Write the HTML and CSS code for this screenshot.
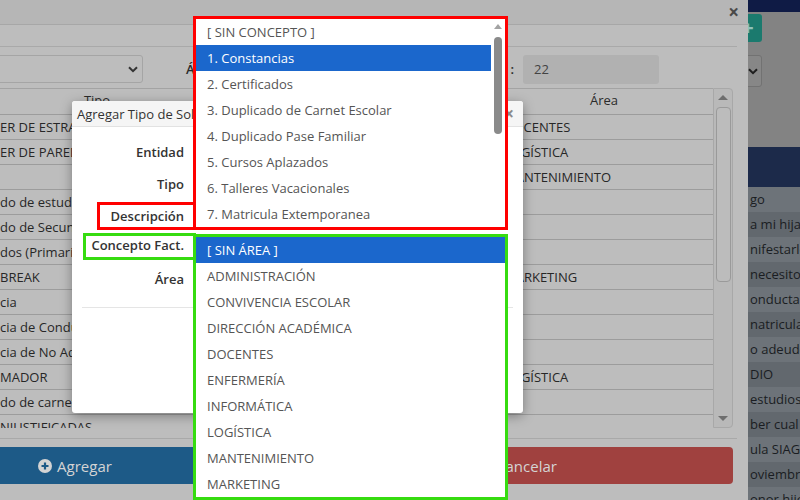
FILE: index.html
```html
<!DOCTYPE html>
<html lang="es">
<head>
<meta charset="utf-8">
<title>Tipos de Solicitud</title>
<link rel="stylesheet" href="styles.css">
</head>
<body>

<div class="page">
  <div class="topbar"></div>
  <div class="page-tools">
    <div class="page-add">+</div>
    <div class="page-select">
      <svg width="10" height="7" viewBox="0 0 10 7"><path d="M1 1.2 L5 5.2 L9 1.2" fill="none" stroke="#1e1e1e" stroke-width="2"/></svg>
    </div>
  </div>
  <div class="page-table">
    <div class="pt-head"></div>
    <div class="pt-row">go</div>
    <div class="pt-row">a mi hija</div>
    <div class="pt-row">nifestarle</div>
    <div class="pt-row">necesito</div>
    <div class="pt-row">onducta</div>
    <div class="pt-row">natricula</div>
    <div class="pt-row">o adeudo</div>
    <div class="pt-row">DIO</div>
    <div class="pt-row">estudios</div>
    <div class="pt-row">ber cual</div>
    <div class="pt-row">ula SIAGIE</div>
    <div class="pt-row">oviembre</div>
    <div class="pt-row">onor hijo</div>
  </div>
</div>

<div class="modal-big">
  <div class="mb-header">
    <span class="mb-title">Tipos de Solicitud</span>
    <span class="mb-close">×</span>
  </div>
  <div class="mb-body">
    <div class="mb-sep"></div>
    <div class="filters">
      <div class="select sel-ent">
        <span>COLEGIO</span>
        <svg width="10" height="7" viewBox="0 0 10 7"><path d="M1 1.2 L5 5.2 L9 1.2" fill="none" stroke="#333" stroke-width="2"/></svg>
      </div>
      <span class="flabel fl-area">Área</span>
      <div class="select sel-area">
        <span>[ TODAS ]</span>
        <svg width="10" height="7" viewBox="0 0 10 7"><path d="M1 1.2 L5 5.2 L9 1.2" fill="none" stroke="#333" stroke-width="2"/></svg>
      </div>
      <span class="flabel fl-total">Total<span class="colon">:</span></span>
      <div class="count">22</div>
    </div>
    <div class="grid-wrap">
      <div class="grid">
        <div class="g-head">
          <div class="gh">Código</div>
          <div class="gh">Tipo</div>
          <div class="gh">Descripción</div>
          <div class="gh">Área</div>
        </div>
        <div class="g-row"><div class="gc"></div><div class="gc">ER DE ESTRADO</div><div class="gc"></div><div class="gc">DOCENTES</div></div>
        <div class="g-row"><div class="gc"></div><div class="gc">ER DE PARED</div><div class="gc"></div><div class="gc">LOGÍSTICA</div></div>
        <div class="g-row"><div class="gc"></div><div class="gc"></div><div class="gc"></div><div class="gc">MANTENIMIENTO</div></div>
        <div class="g-row"><div class="gc"></div><div class="gc">do de estudios</div><div class="gc"></div><div class="gc"></div></div>
        <div class="g-row"><div class="gc"></div><div class="gc">do de Secundaria</div><div class="gc"></div><div class="gc"></div></div>
        <div class="g-row"><div class="gc"></div><div class="gc">dos (Primaria)</div><div class="gc"></div><div class="gc"></div></div>
        <div class="g-row"><div class="gc"></div><div class="gc">BREAK</div><div class="gc"></div><div class="gc">MARKETING</div></div>
        <div class="g-row"><div class="gc"></div><div class="gc">cia</div><div class="gc"></div><div class="gc"></div></div>
        <div class="g-row"><div class="gc"></div><div class="gc">cia de Conducta</div><div class="gc"></div><div class="gc"></div></div>
        <div class="g-row"><div class="gc"></div><div class="gc">cia de No Adeudo</div><div class="gc"></div><div class="gc"></div></div>
        <div class="g-row"><div class="gc"></div><div class="gc">MADOR</div><div class="gc"></div><div class="gc">LOGÍSTICA</div></div>
        <div class="g-row"><div class="gc"></div><div class="gc">do de carnet</div><div class="gc"></div><div class="gc"></div></div>
        <div class="g-row"><div class="gc"></div><div class="gc">NJUSTIFICADAS</div><div class="gc"></div><div class="gc"></div></div>
      </div>
      <div class="vscroll">
        <div class="vs-arrow"><span class="tri-up"></span></div>
        <div class="vs-thumb"></div>
        <div class="vs-space"></div>
        <div class="vs-arrow"><span class="tri-down"></span></div>
      </div>
    </div>
    <div class="mb-sep2"></div>
    <div class="actions">
      <div class="btn btn-primary">
        <svg width="14" height="14" viewBox="0 0 14 14"><circle cx="7" cy="7" r="7" fill="#d4d4d4"/><path d="M7 3.5 V10.5 M3.5 7 H10.5" stroke="#1d5a87" stroke-width="2.2"/></svg>
        <span>Agregar</span>
      </div>
      <div class="btn btn-danger">
        <svg width="14" height="14" viewBox="0 0 14 14"><circle cx="7" cy="7" r="7" fill="#d4d4d4"/><path d="M4.5 4.5 L9.5 9.5 M9.5 4.5 L4.5 9.5" stroke="#a0413f" stroke-width="2"/></svg>
        <span>Cancelar</span>
      </div>
    </div>
  </div>
</div>

<div class="modal-small">
  <div class="ms-header">
    <span class="ms-title">Agregar Tipo de Solicitud</span>
    <span class="ms-close">×</span>
  </div>
  <div class="ms-body">
    <div class="frow r1"><span class="flab">Entidad</span></div>
    <div class="frow r2"><span class="flab">Tipo</span></div>
    <div class="frow r3"><span class="flab">Descripción</span></div>
    <div class="frow r4"><span class="flab">Concepto Fact.</span></div>
    <div class="frow r5"><span class="flab">Área</span></div>
    <div class="ms-sep"></div>
  </div>
</div>

<div class="mark mark-red"></div>
<div class="mark mark-green"></div>

<div class="dd dd-red">
  <div class="opts">
    <div class="opt">[ SIN CONCEPTO ]</div>
    <div class="opt sel">1. Constancias</div>
    <div class="opt">2. Certificados</div>
    <div class="opt">3. Duplicado de Carnet Escolar</div>
    <div class="opt">4. Duplicado Pase Familiar</div>
    <div class="opt">5. Cursos Aplazados</div>
    <div class="opt">6. Talleres Vacacionales</div>
    <div class="opt">7. Matricula Extemporanea</div>
  </div>
  <div class="dd-scroll">
    <span class="dd-up"></span>
    <span class="dd-thumb"></span>
  </div>
</div>

<div class="dd dd-green">
  <div class="opts">
    <div class="opt sel">[ SIN ÁREA ]</div>
    <div class="opt">ADMINISTRACIÓN</div>
    <div class="opt">CONVIVENCIA ESCOLAR</div>
    <div class="opt">DIRECCIÓN ACADÉMICA</div>
    <div class="opt">DOCENTES</div>
    <div class="opt">ENFERMERÍA</div>
    <div class="opt">INFORMÁTICA</div>
    <div class="opt">LOGÍSTICA</div>
    <div class="opt">MANTENIMIENTO</div>
    <div class="opt">MARKETING</div>
  </div>
</div>

</body>
</html>
```

FILE: styles.css
```css
* { box-sizing: border-box; }

html, body {
  margin: 0;
  width: 800px;
  height: 500px;
  overflow: hidden;
}

body {
  position: relative;
  background: #838383;
  font-family: "Open Sans", "DejaVu Sans", sans-serif;
  font-size: 13px;
  color: #333;
}

/* ---------- underlying page (dimmed) ---------- */
.page {
  display: flex;
  flex-direction: column;
}
.topbar {
  height: 12px;
  background: #0f1b45;
}
.page-tools {
  margin-left: 700px;
  width: 62px;
  display: flex;
  flex-direction: column;
  align-items: flex-end;
}
.page-add {
  margin-top: 2px;
  width: 28px;
  height: 28px;
  border-radius: 3px;
  background: #1b7a6e;
  color: #8fc2ba;
  font-size: 20px;
  font-weight: 700;
  line-height: 27px;
  text-align: center;
}
.page-select {
  margin-top: 13px;
  width: 62px;
  height: 32px;
  border: 1px solid #727272;
  border-radius: 3px;
  background: #878787;
  display: flex;
  align-items: center;
  justify-content: flex-end;
  padding-right: 3px;
}
.page-table {
  margin-top: 60px;
  margin-left: 700px;
  width: 200px;
}
.pt-head {
  height: 40px;
  background: #1c2a4a;
}
.pt-row {
  height: 25px;
  line-height: 25px;
  padding-left: 50px;
  white-space: nowrap;
  overflow: hidden;
  color: #1a1d22;
  background: #6d7379;
}
.pt-row:nth-child(odd) {
  background: #62686e;
}

/* ---------- big modal (dimmed) ---------- */
.modal-big {
  position: absolute;
  left: -150px;
  top: 0;
  width: 898px;
  height: 560px;
  background: #bdbdbd;
}
.mb-header {
  height: 25px;
  background: #b6b6b6;
  border-bottom: 1px solid #a7a7a7;
  display: flex;
  align-items: center;
  justify-content: space-between;
  padding: 0 9px 0 15px;
}
.mb-title {
  color: #2c2c2c;
  font-size: 14px;
}
.mb-close {
  color: #4a4a4a;
  font-size: 19px;
  font-weight: 700;
  line-height: 20px;
}
.mb-body {
  padding: 0 15px;
}
.mb-sep {
  margin-top: 21px;
  margin-right: -4px;
  height: 1px;
  background: #a9a9a9;
}
.filters {
  margin-top: 8px;
  height: 28px;
  display: flex;
  align-items: center;
}
.select {
  height: 28px;
  border: 1px solid #a5a5a5;
  border-radius: 3px;
  display: flex;
  align-items: center;
  justify-content: space-between;
  padding: 0 4px 0 10px;
  color: #2e2e2e;
}
.sel-ent { width: 278px; }
.flabel {
  color: #2a2a2a;
  font-weight: 600;
}
.fl-area {
  margin-left: 43px;
  width: 34px;
}
.sel-area {
  margin-left: 8px;
  width: 200px;
}
.fl-total {
  width: 86px;
  text-align: right;
  white-space: nowrap;
}
.colon {
  margin-left: 4px;
}
.count {
  margin-left: 9px;
  width: 136px;
  height: 29px;
  border-radius: 3px;
  background: #b1b1b1;
  padding-left: 11px;
  line-height: 29px;
  color: #434343;
}
.grid-wrap {
  margin-top: 5px;
  height: 340px;
  display: flex;
}
.grid {
  width: 848px;
  border-top: 1px solid #a3a3a3;
  overflow: hidden;
}
.g-head,
.g-row {
  display: grid;
  grid-template-columns: 127px 210px 293px 218px;
}
.g-head {
  height: 26px;
  border-bottom: 1px solid #9c9c9c;
}
.gh {
  text-align: center;
  line-height: 22px;
  color: #2b2b2b;
}
.g-row {
  height: 25px;
  border-bottom: 1px solid #9c9c9c;
}
.gc {
  padding-left: 8px;
  line-height: 25px;
  white-space: nowrap;
  overflow: hidden;
  color: #272727;
}
.gc:nth-child(4) {
  padding-left: 9px;
}
.vscroll {
  width: 20px;
  border: 1px solid #a8a8a8;
  border-radius: 0 4px 4px 0;
  background: #b9b9b9;
  display: flex;
  flex-direction: column;
  align-items: center;
}
.vs-arrow {
  height: 17px;
  display: flex;
  align-items: center;
  justify-content: center;
}
.tri-up {
  width: 0;
  height: 0;
  border-left: 5px solid transparent;
  border-right: 5px solid transparent;
  border-bottom: 5px solid #6e6e6e;
}
.tri-down {
  width: 0;
  height: 0;
  border-left: 5px solid transparent;
  border-right: 5px solid transparent;
  border-top: 5px solid #6e6e6e;
}
.vs-thumb {
  margin-top: 1px;
  width: 15px;
  height: 175px;
  border: 1px solid #9a9a9a;
  border-radius: 4px;
  background: #bcbcbc;
}
.vs-space { flex: 1; }

.mb-sep2 {
  margin-top: 10px;
  margin-right: -4px;
  height: 1px;
  background: #a9a9a9;
}
.actions {
  margin-top: 8px;
  margin-left: -6px;
  display: flex;
  gap: 10px;
}
.btn {
  flex: 1;
  height: 37px;
  border-radius: 4px;
  display: flex;
  align-items: center;
  justify-content: center;
  gap: 5px;
  color: #d4d4d4;
  font-size: 15px;
}
.btn-primary { background: #1d5a87; }
.btn-danger { background: #a0413f; }

/* ---------- small modal ---------- */
.modal-small {
  position: absolute;
  left: 72px;
  top: 101px;
  width: 451px;
  height: 312px;
  background: #fff;
  border-radius: 3px;
  box-shadow: 0 3px 12px rgba(0, 0, 0, 0.35);
}
.ms-header {
  height: 26px;
  background: #f5f5f5;
  border-bottom: 1px solid #e2e2e2;
  border-radius: 3px 3px 0 0;
  display: flex;
  align-items: center;
  justify-content: space-between;
  padding: 0 9px 0 5px;
}
.ms-title {
  color: #333;
  white-space: nowrap;
}
.ms-close {
  color: #8a8a8a;
  font-size: 17px;
  font-weight: 700;
}
.ms-body {
  padding: 8px 10px 0;
}
.frow {
  display: flex;
  align-items: center;
}
.r1 { height: 33px; }
.r2 { height: 32px; }
.r3 { height: 32px; }
.r4 { height: 26px; }
.r5 { height: 42px; }
.flab {
  width: 102px;
  text-align: right;
  font-weight: 600;
  color: #333;
  white-space: nowrap;
}
.ms-sep {
  margin-top: 7px;
  height: 1px;
  background: #e5e5e5;
}

/* ---------- annotation frames ---------- */
.mark {
  position: absolute;
  border: 3px solid;
}
.mark-red {
  left: 97px;
  top: 202px;
  width: 99px;
  height: 28px;
  border-color: #ff0000;
}
.mark-green {
  left: 83px;
  top: 233px;
  width: 113px;
  height: 27px;
  border-color: #36dc10;
}

/* ---------- open dropdowns ---------- */
.dd {
  position: absolute;
  left: 193px;
  width: 315px;
  background: #fff;
  border: 3px solid;
  display: flex;
}
.dd-red {
  top: 16px;
  height: 214px;
  border-color: #ff0000;
}
.dd-green {
  top: 234px;
  height: 266px;
  border-color: #36dc10;
}
.opts {
  flex: 1;
}
.opt {
  height: 26px;
  line-height: 26px;
  padding-left: 11px;
  color: #555;
  white-space: nowrap;
}
.opt.sel {
  background: #1b67cc;
  color: #fff;
}
.dd-scroll {
  width: 14px;
  display: flex;
  flex-direction: column;
  align-items: center;
}
.dd-up {
  margin-top: 5px;
  width: 0;
  height: 0;
  border-left: 4px solid transparent;
  border-right: 4px solid transparent;
  border-bottom: 5px solid #a3a3a3;
}
.dd-thumb {
  margin-top: 8px;
  width: 8px;
  height: 97px;
  border-radius: 4px;
  background: #8a8a8a;
}
```
